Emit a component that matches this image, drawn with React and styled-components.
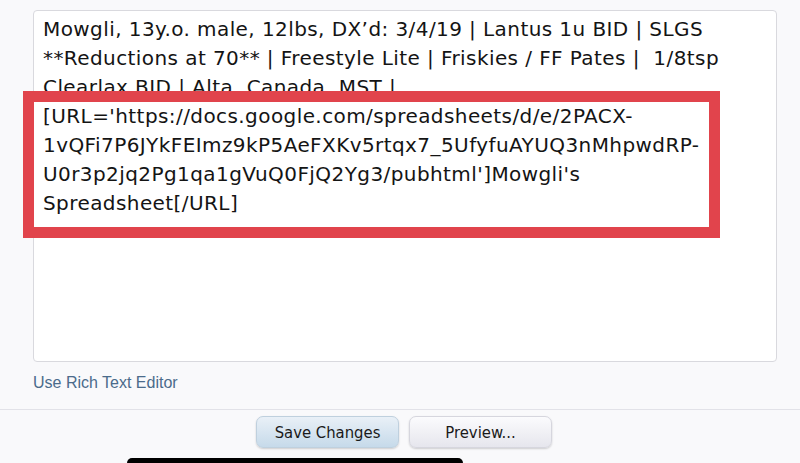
import React from 'react';
import styled, { createGlobalStyle } from 'styled-components';

const GlobalStyle = createGlobalStyle`
  html, body {
    margin: 0;
    padding: 0;
    background: #f9f9fb;
    overflow: hidden;
  }
`;

const Page = styled.div`
  position: relative;
  width: 800px;
  height: 463px;
  background: #f9f9fb;
  overflow: hidden;
`;

const EditorArea = styled.div`
  padding: 10px 23px 0 33px;
`;

const TextBox = styled.div`
  position: relative;
  height: 352px;
  background: #fff;
  border: 1px solid #d9d9de;
  border-radius: 4px;
  padding: 4px 9px;
  box-sizing: border-box;
  font-family: "DejaVu Sans", Verdana, sans-serif;
  font-size: 20px;
  letter-spacing: 0.42px;
  line-height: 29px;
  color: #141414;
`;

const Line = styled.div`
  white-space: pre;
`;

const Highlight = styled.div`
  position: absolute;
  left: -11px;
  top: 80px;
  width: 697px;
  height: 147px;
  border: 11px solid #e1444c;
  box-sizing: border-box;
  pointer-events: none;
`;

const EditorLink = styled.a`
  display: block;
  margin: 12px 0 0;
  font-family: "Liberation Sans", Arial, sans-serif;
  font-size: 16px;
  line-height: 18px;
  color: #4b6b8b;
  text-decoration: none;
`;

const Footer = styled.div`
  margin-top: 17px;
  border-top: 1px solid #e2e2e8;
  display: flex;
  justify-content: center;
  gap: 10px;
  padding: 6px 0 0 8px;
`;

const Button = styled.button`
  width: 143px;
  height: 32px;
  border: 1px solid ${p => (p.primary ? '#bfd0de' : '#d6d6de')};
  border-radius: 7px;
  background: ${p =>
    p.primary
      ? 'linear-gradient(#e9f0f7, #c6daea)'
      : 'linear-gradient(#fbfbfd, #e6e6ed)'};
  box-shadow: 0 1px 2px rgba(0, 0, 0, 0.18);
  font-family: "DejaVu Sans Condensed", "DejaVu Sans", Verdana, sans-serif;
  font-size: 16.5px;
  color: #1a1a1a;
  padding: 0;
`;

const HomeBar = styled.div`
  position: absolute;
  left: 127px;
  bottom: 0;
  width: 336px;
  height: 5px;
  background: #000;
  border-radius: 6px 6px 0 0;
`;

const lines = [
  'Mowgli, 13y.o. male, 12lbs, DX\u2019d: 3/4/19 | Lantus 1u BID | SLGS',
  '**Reductions at 70** | Freestyle Lite | Friskies / FF Pates |  1/8tsp',
  'Clearlax BID | Alta, Canada, MST |',
  "[URL='https://docs.google.com/spreadsheets/d/e/2PACX-",
  '1vQFi7P6JYkFEImz9kP5AeFXKv5rtqx7_5UfyfuAYUQ3nMhpwdRP-',
  "U0r3p2jq2Pg1qa1gVuQ0FjQ2Yg3/pubhtml']Mowgli's",
  'Spreadsheet[/URL]',
];

const App = () => (
  <Page>
    <GlobalStyle />
    <EditorArea>
      <TextBox>
        {lines.map((l, i) => (
          <Line key={i}>{l}</Line>
        ))}
        <Highlight />
      </TextBox>
      <EditorLink href="#">Use Rich Text Editor</EditorLink>
    </EditorArea>
    <Footer>
      <Button primary>Save Changes</Button>
      <Button>Preview...</Button>
    </Footer>
    <HomeBar />
  </Page>
);

export default App;
